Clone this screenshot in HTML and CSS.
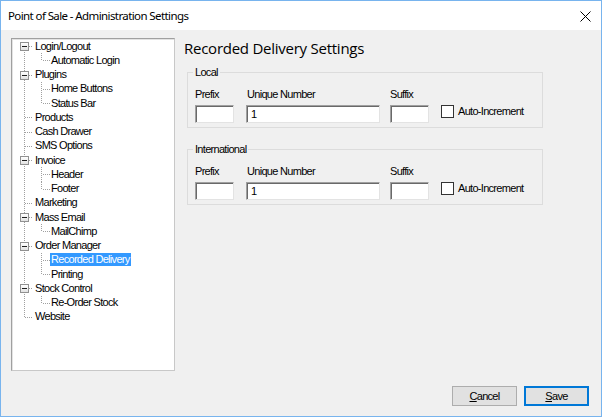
FILE: index.html
```html
<!DOCTYPE html>
<html>
<head>
<meta charset="utf-8">
<title>Point of Sale - Administration Settings</title>
<link rel="stylesheet" href="styles.css">
</head>
<body>
<div class="window">
  <div class="titlebar">
    <span class="title">Point of Sale - Administration Settings</span>
    <svg class="close" width="11" height="11" viewBox="0 0 11 11"><path d="M0.5 0.5 L10.5 10.5 M10.5 0.5 L0.5 10.5" stroke="#000" stroke-width="1" fill="none"/></svg>
  </div>
  <div class="client">
    <div class="main">
      <div class="tree">
        <div class="nodes">
          <div class="row l1 exp"><span class="expander"></span><span class="label">Login/Logout</span></div>
          <div class="row l2 last"><span class="label">Automatic Login</span></div>
          <div class="row l1 exp"><span class="expander"></span><span class="label">Plugins</span></div>
          <div class="row l2"><span class="label">Home Buttons</span></div>
          <div class="row l2 last"><span class="label">Status Bar</span></div>
          <div class="row l1"><span class="label">Products</span></div>
          <div class="row l1"><span class="label">Cash Drawer</span></div>
          <div class="row l1"><span class="label">SMS Options</span></div>
          <div class="row l1 exp"><span class="expander"></span><span class="label">Invoice</span></div>
          <div class="row l2"><span class="label">Header</span></div>
          <div class="row l2 last"><span class="label">Footer</span></div>
          <div class="row l1"><span class="label">Marketing</span></div>
          <div class="row l1 exp"><span class="expander"></span><span class="label">Mass Email</span></div>
          <div class="row l2 last"><span class="label">MailChimp</span></div>
          <div class="row l1 exp"><span class="expander"></span><span class="label">Order Manager</span></div>
          <div class="row l2"><span class="label selected">Recorded Delivery</span></div>
          <div class="row l2 last"><span class="label">Printing</span></div>
          <div class="row l1 exp"><span class="expander"></span><span class="label">Stock Control</span></div>
          <div class="row l2 last"><span class="label">Re-Order Stock</span></div>
          <div class="row l1"><span class="label">Website</span></div>
        </div>
      </div>
      <div class="panel">
        <h1 class="heading">Recorded Delivery Settings</h1>
        <fieldset class="group">
          <legend class="legend">Local</legend>
          <div class="fields">
            <div class="field"><span class="flabel">Prefix</span><input class="textbox short" type="text" value=""></div>
            <div class="field"><span class="flabel">Unique Number</span><input class="textbox long" type="text" value="1"></div>
            <div class="field"><span class="flabel">Suffix</span><input class="textbox short" type="text" value=""></div>
            <div class="check"><span class="checkbox"></span><span class="clabel">Auto-Increment</span></div>
          </div>
        </fieldset>
        <fieldset class="group group2">
          <legend class="legend">International</legend>
          <div class="fields">
            <div class="field"><span class="flabel">Prefix</span><input class="textbox short" type="text" value=""></div>
            <div class="field"><span class="flabel">Unique Number</span><input class="textbox long" type="text" value="1"></div>
            <div class="field"><span class="flabel">Suffix</span><input class="textbox short" type="text" value=""></div>
            <div class="check"><span class="checkbox"></span><span class="clabel">Auto-Increment</span></div>
          </div>
        </fieldset>
      </div>
    </div>
    <div class="footer">
      <button class="btn" type="button"><u>C</u>ancel</button>
      <button class="btn default" type="button"><u>S</u>ave</button>
    </div>
  </div>
</div>
</body>
</html>
```
FILE: styles.css
```css
html, body {
  margin: 0;
  padding: 0;
  background: #ffffff;
}

.window {
  box-sizing: border-box;
  width: 602px;
  height: 417px;
  border: 1px solid #78b4ee;
  display: flex;
  flex-direction: column;
  background: #f0f0f0;
  font-family: "Liberation Sans", Arial, sans-serif;
  font-size: 11px;
  color: #000;
}

.titlebar {
  height: 29px;
  flex: none;
  background: #ffffff;
  display: flex;
  align-items: center;
  justify-content: space-between;
  padding: 0 10px 0 7px;
}

.title {
  font-family: "Noto Sans", "Open Sans", sans-serif;
  font-size: 11.5px;
  letter-spacing: -0.6px;
  line-height: 16px;
  margin-top: 1px;
}

.close {
  display: block;
  margin-top: 1px;
}

.client {
  flex: 1;
  display: flex;
  flex-direction: column;
  padding: 8px 12px 10px 10px;
}

.main {
  display: flex;
  align-items: flex-start;
}

/* ---------- tree ---------- */
.tree {
  box-sizing: border-box;
  width: 164px;
  height: 333px;
  flex: none;
  background: #fff;
  border: 1px solid #a0a0a0;
  border-right-color: #c8c8c8;
  border-bottom-color: #c8c8c8;
  box-shadow: inset 1px 1px 0 #e3e3e3;
}

.nodes {
  position: relative;
  background-image: repeating-linear-gradient(to bottom, #a0a0a0 0 1px, transparent 1px 2px);
  background-repeat: no-repeat;
  background-size: 1px calc(100% - 14px);
  background-position: 12px 7px;
}

.row {
  position: relative;
  height: 14.25px;
  display: flex;
  align-items: center;
  letter-spacing: -0.7px;
  white-space: nowrap;
}

.row::before,
.row::after {
  content: "";
  position: absolute;
}

.row.l1 { padding-left: 22px; }
.row.l2 { padding-left: 38px; }

/* horizontal connector for level 1 */
.row.l1::before {
  left: 13px;
  width: 8px;
  top: 7px;
  height: 1px;
  background: repeating-linear-gradient(to right, #a0a0a0 0 1px, transparent 1px 2px);
}

/* vertical child line for level 2 */
.row.l2::before {
  left: 29px;
  top: 0;
  width: 1px;
  height: 100%;
  background: repeating-linear-gradient(to bottom, #a0a0a0 0 1px, transparent 1px 2px);
}
.row.l2.last::before { height: 8px; }

/* horizontal connector for level 2 */
.row.l2::after {
  left: 31px;
  width: 7px;
  top: 7px;
  height: 1px;
  background: repeating-linear-gradient(to right, #a0a0a0 0 1px, transparent 1px 2px);
}

.expander {
  position: absolute;
  left: 8px;
  top: 3px;
  box-sizing: border-box;
  width: 9px;
  height: 9px;
  border: 1px solid #919191;
  background: linear-gradient(#ffffff, #e2e2e2);
  z-index: 1;
}
.expander::after {
  content: "";
  position: absolute;
  left: 1px;
  top: 3px;
  width: 5px;
  height: 1px;
  background: #1e1e1e;
}

.label {
  line-height: 13px;
  padding: 0 1px;
}

.label.selected {
  background: #3399ff;
  color: #fff;
}

/* ---------- right panel ---------- */
.panel {
  margin-left: 10px;
  flex: 1;
}

.heading {
  margin: 0 0 0 -1px;
  font-family: "Open Sans", "Noto Sans", sans-serif;
  font-weight: normal;
  font-size: 15px;
  line-height: 20px;
  letter-spacing: -0.25px;
}

.group {
  box-sizing: border-box;
  width: 356px;
  margin: 8px 0 0 2px;
  padding: 10px 7px 4px 7px;
  border: 1px solid #dcdcdc;
  min-inline-size: 0;
}

.group2 {
  margin-top: 15px;
}

.legend {
  padding: 0 2px;
  margin-left: -2px;
  line-height: 12px;
  letter-spacing: -0.7px;
}

.fields {
  display: flex;
  align-items: flex-start;
}

.field {
  display: flex;
  flex-direction: column;
  margin-right: 12px;
}
.field:nth-child(2) { margin-right: 10px; }
.field:nth-child(3) { margin-right: 12px; }

.flabel {
  line-height: 13px;
  letter-spacing: -0.7px;
  padding-left: 0;
}
.field:nth-child(2) .flabel { padding-left: 1px; }

.textbox {
  box-sizing: border-box;
  height: 18px;
  margin: 4px 0 0 0;
  padding: 0 2px 0 3px;
  background: #fff;
  border: 1px solid #a0a0a0;
  border-right-color: #e3e3e3;
  border-bottom-color: #e3e3e3;
  box-shadow: inset 1px 1px 0 #696969;
  font-family: "Liberation Sans", Arial, sans-serif;
  font-size: 11px;
  letter-spacing: -0.7px;
  color: #000;
  outline: none;
}

.textbox.short { width: 39px; }
.textbox.long { width: 134px; padding-left: 4px; }

.check {
  display: flex;
  align-items: center;
  margin-top: 17px;
}

.checkbox {
  box-sizing: border-box;
  width: 13px;
  height: 13px;
  border: 1px solid #333;
  background: #fff;
  margin-right: 4px;
}

.clabel {
  line-height: 13px;
  letter-spacing: -0.7px;
}

/* ---------- footer ---------- */
.footer {
  margin-top: auto;
  display: flex;
  justify-content: flex-end;
  gap: 7px;
}

.btn {
  box-sizing: border-box;
  width: 65px;
  height: 20px;
  padding: 0;
  background: #e1e1e1;
  border: 1px solid #adadad;
  font-family: "Liberation Sans", Arial, sans-serif;
  font-size: 11px;
  letter-spacing: -0.7px;
  color: #000;
}

.btn.default {
  border-color: #0078d7;
  box-shadow: inset 0 0 0 1px #0078d7;
}
```
